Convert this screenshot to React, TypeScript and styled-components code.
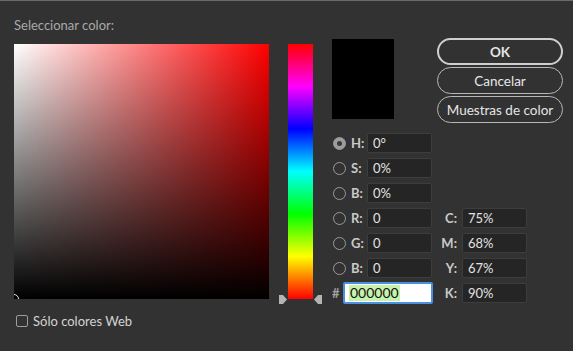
import styled, { createGlobalStyle } from 'styled-components';

const GlobalStyle = createGlobalStyle`
  html, body {
    margin: 0;
    padding: 0;
    background: #323232;
  }
  body {
    font-family: Lato, "Open Sans", sans-serif;
  }
`;

const Dialog = styled.div`
  width: 573px;
  height: 351px;
  box-sizing: border-box;
  background: #323232;
  border-top: 1px solid #6b6b6b;
  padding: 16px 0 0 14px;
  display: flex;
  align-items: flex-start;
  overflow: hidden;
`;

const LeftColumn = styled.div`
  display: flex;
  flex-direction: column;
  width: 255px;
`;

const Title = styled.div`
  font-size: 13px;
  line-height: 16px;
  color: #a9a9a9;
  margin-bottom: 11px;
`;

const ColorField = styled.div`
  position: relative;
  width: 255px;
  height: 255px;
  overflow: hidden;
  background: linear-gradient(to top, #000, rgba(0, 0, 0, 0)),
    linear-gradient(to right, #fff, #f00);
`;

const FieldMarker = styled.div`
  position: absolute;
  left: -5px;
  bottom: -5px;
  width: 8px;
  height: 8px;
  border: 1px solid #e8e8e8;
  border-radius: 50%;
`;

const WebOnly = styled.label`
  display: flex;
  align-items: center;
  gap: 5px;
  margin: 14px 0 0 2px;
  font-size: 13px;
  line-height: 16px;
  color: #d4d4d4;
`;

const Checkbox = styled.span`
  width: 10px;
  height: 10px;
  border: 1px solid #9c9c9c;
  border-radius: 2px;
`;

const HueColumn = styled.div`
  position: relative;
  margin: 27px 0 0 19px;
  width: 25px;
  height: 255px;
  background: linear-gradient(
    to bottom,
    #f00 0%,
    #f0f 16.67%,
    #00f 33.33%,
    #0ff 50%,
    #0f0 66.67%,
    #ff0 83.33%,
    #f00 100%
  );
`;

const HueArrow = styled.svg<{ $side: 'left' | 'right' }>`
  position: absolute;
  bottom: -5px;
  ${({ $side }) => ($side === 'left' ? 'left: -9px;' : 'right: -9px; transform: scaleX(-1);')}
`;

const MainColumn = styled.div`
  margin: 22px 0 0 19px;
  display: flex;
  flex-direction: column;
`;

const TopRow = styled.div`
  display: flex;
  align-items: flex-start;
  height: 80px;
`;

const Swatch = styled.div<{ $color: string }>`
  width: 62px;
  height: 80px;
  background: ${({ $color }) => $color};
`;

const Buttons = styled.div`
  margin: -1px 0 0 43px;
  display: flex;
  flex-direction: column;
  gap: 2px;
`;

const Button = styled.button<{ $primary?: boolean }>`
  width: 126px;
  height: 27px;
  box-sizing: border-box;
  border-radius: 14px;
  background: transparent;
  border: ${({ $primary }) => ($primary ? '2px solid #cfcfcf' : '1px solid #b8b8b8')};
  color: #e6e6e6;
  font-family: inherit;
  font-size: 13.5px;
  font-weight: ${({ $primary }) => ($primary ? 700 : 400)};
  padding: 0;
`;

const Fields = styled.div`
  margin: 14px 0 0 1px;
  display: grid;
  grid-template-columns: 18px 16px 65px 30px 65px;
  grid-auto-rows: 20px;
  row-gap: 5px;
  align-items: center;
`;

const Radio = styled.span<{ $checked?: boolean }>`
  width: 13px;
  height: 13px;
  box-sizing: border-box;
  border-radius: 50%;
  border: 1px solid #9a9a9a;
  background: ${({ $checked }) => ($checked ? '#9d9d9d' : 'transparent')};
  display: flex;
  align-items: center;
  justify-content: center;

  &::after {
    content: '';
    width: 5px;
    height: 5px;
    border-radius: 50%;
    background: ${({ $checked }) => ($checked ? '#3a3a3a' : 'transparent')};
  }
`;

const Label = styled.span<{ $right?: boolean }>`
  font-size: 13px;
  font-weight: 700;
  color: #c9c9c9;
  text-align: ${({ $right }) => ($right ? 'right' : 'left')};
  padding-right: ${({ $right }) => ($right ? '5px' : '0')};
`;

const Input = styled.div`
  height: 20px;
  box-sizing: border-box;
  background: #252525;
  border: 1px solid #3d3d3d;
  border-radius: 2px;
  color: #e2e2e2;
  font-size: 13px;
  line-height: 18px;
  padding-left: 5px;
`;

const HexRow = styled.div`
  grid-column: 1 / 4;
  display: flex;
  align-items: center;
  justify-content: space-between;
  margin-right: -1px;
`;

const Hash = styled.span`
  margin-left: -1px;
  font-size: 13px;
  font-weight: 700;
  color: #a0a0a0;
`;

const HexInput = styled.div`
  width: 90px;
  height: 22px;
  box-sizing: border-box;
  background: #fff;
  border: 2px solid #4a8fe0;
  border-radius: 2px;
  padding: 1px 0 0 4px;
  font-size: 14px;
  line-height: 16px;
  color: #111;
`;

const Selection = styled.span`
  display: inline-block;
  background: #c6f3ac;
  padding: 0 1px;
`;

const hsbRows = [
  { key: 'H', value: '0°', checked: true },
  { key: 'S', value: '0%' },
  { key: 'B', value: '0%' },
];

const rgbRows = [
  { key: 'R', value: '0', cmyk: 'C', cmykValue: '75%' },
  { key: 'G', value: '0', cmyk: 'M', cmykValue: '68%' },
  { key: 'B', value: '0', cmyk: 'Y', cmykValue: '67%' },
];

function Arrow({ side }: { side: 'left' | 'right' }) {
  return (
    <HueArrow $side={side} width="8" height="9" viewBox="0 0 8 9">
      <polygon points="0,0 4,0 8,4.5 4,9 0,9" fill="#b4b4b4" />
    </HueArrow>
  );
}

export default function App() {
  return (
    <>
      <GlobalStyle />
      <Dialog>
        <LeftColumn>
          <Title>Seleccionar color:</Title>
          <ColorField>
            <FieldMarker />
          </ColorField>
          <WebOnly>
            <Checkbox />
            Sólo colores Web
          </WebOnly>
        </LeftColumn>

        <HueColumn>
          <Arrow side="left" />
          <Arrow side="right" />
        </HueColumn>

        <MainColumn>
          <TopRow>
            <Swatch $color="#000000" />
            <Buttons>
              <Button $primary>OK</Button>
              <Button>Cancelar</Button>
              <Button>Muestras de color</Button>
            </Buttons>
          </TopRow>

          <Fields>
            {hsbRows.map((row) => (
              <>
                <Radio key={row.key + 'r'} $checked={row.checked} />
                <Label>{row.key}:</Label>
                <Input>{row.value}</Input>
                <span />
                <span />
              </>
            ))}
            {rgbRows.map((row) => (
              <>
                <Radio key={row.key + 'r'} />
                <Label>{row.key}:</Label>
                <Input>{row.value}</Input>
                <Label $right>{row.cmyk}:</Label>
                <Input>{row.cmykValue}</Input>
              </>
            ))}
            <HexRow>
              <Hash>#</Hash>
              <HexInput>
                <Selection>000000</Selection>
              </HexInput>
            </HexRow>
            <Label $right>K:</Label>
            <Input>90%</Input>
          </Fields>
        </MainColumn>
      </Dialog>
    </>
  );
}
